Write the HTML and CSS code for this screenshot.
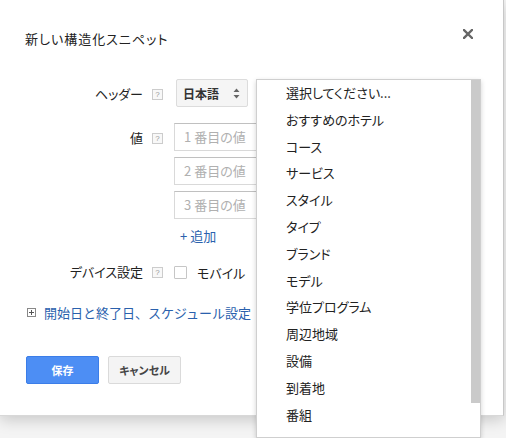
FILE: index.html
```html
<!DOCTYPE html>
<html lang="ja">
<head>
<meta charset="utf-8">
<link rel="stylesheet" href="styles.css">
</head>
<body>
<div class="dialog">
  <div class="head">
    <div class="title">新しい構造化スニペット</div>
    <svg class="close" width="10" height="10" viewBox="0 0 10 10"><path d="M1 1L9 9M9 1L1 9" stroke="#666" stroke-width="2.4" stroke-linecap="square"/></svg>
  </div>
  <div class="form">
    <div class="row row-header">
      <div class="label">ヘッダー</div>
      <span class="help">?</span>
      <div class="select">
        <span class="select-text">日本語</span>
        <svg width="7" height="11" viewBox="0 0 7 11"><path d="M3.5 0.5L6.5 4H0.5Z M3.5 10.5L6.5 7H0.5Z" fill="#666"/></svg>
      </div>
    </div>
    <div class="row row-values">
      <div class="label">値</div>
      <span class="help">?</span>
      <div class="values">
        <div class="input">1 番目の値</div>
        <div class="input">2 番目の値</div>
        <div class="input input-last">3 番目の値</div>
        <div class="add">+ 追加</div>
      </div>
    </div>
    <div class="row row-device">
      <div class="label">デバイス設定</div>
      <span class="help">?</span>
      <span class="checkbox"></span>
      <span class="check-label">モバイル</span>
    </div>
    <div class="schedule">
      <svg class="plusbox" width="9" height="9" viewBox="0 0 9 9"><rect x="0.5" y="0.5" width="8" height="8" fill="#fff" stroke="#888"/><path d="M2 4.5H7M4.5 2V7" stroke="#555"/></svg>
      <span class="link">開始日と終了日、スケジュール設定</span>
    </div>
    <div class="buttons">
      <span class="btn btn-primary">保存</span>
      <span class="btn btn-default">キャンセル</span>
    </div>
  </div>
</div>
<div class="dropdown">
  <div class="item">選択してください...</div>
  <div class="item">おすすめのホテル</div>
  <div class="item">コース</div>
  <div class="item">サービス</div>
  <div class="item">スタイル</div>
  <div class="item">タイプ</div>
  <div class="item">ブランド</div>
  <div class="item">モデル</div>
  <div class="item">学位プログラム</div>
  <div class="item">周辺地域</div>
  <div class="item">設備</div>
  <div class="item">到着地</div>
  <div class="item">番組</div>
  <div class="thumb"></div>
</div>
</body>
</html>
```
FILE: styles.css
```css
html, body {
  margin: 0;
  padding: 0;
  height: 438px;
  overflow: hidden;
}
body {
  background: #f4f4f4;
  font-family: "Noto Sans CJK JP", "Liberation Sans", sans-serif;
  font-size: 13px;
  color: #222;
  position: relative;
  font-feature-settings: "palt";
}
.dialog {
  width: 504px;
  height: 416px;
  box-sizing: border-box;
  background: #fff;
  border-right: 1px solid #c8c8c8;
  border-bottom: 1px solid #d8d8d8;
  box-shadow: 0 4px 14px rgba(0,0,0,0.18);
}
.head {
  display: flex;
  justify-content: space-between;
  align-items: center;
  padding: 30px 30px 0 25px;
  height: 18px;
}
.title {
  font-size: 13px;
  line-height: 18px;
  color: #222;
  letter-spacing: 1px;
}
.close {
  margin-top: -10px;
}
.form {
  margin-top: 31px;
}
.row {
  display: flex;
  align-items: flex-start;
}
.label {
  width: 143px;
  text-align: right;
  line-height: 28px;
  height: 28px;
  padding-top: 1px;
  box-sizing: border-box;
  color: #222;
}
.help {
  width: 9px;
  height: 9px;
  border: 1px solid #ccc;
  background: #f8f8f8;
  color: #999;
  font-size: 8px;
  line-height: 9px;
  text-align: center;
  margin: 10px 11px 0 9px;
  font-family: "Liberation Sans", sans-serif;
}
.row-header .help { margin-right: 13px; }
.select {
  width: 72px;
  height: 28px;
  box-sizing: border-box;
  background: #f5f5f5;
  border: 1px solid #dcdcdc;
  border-radius: 2px;
  display: flex;
  align-items: center;
  justify-content: space-between;
  padding: 0 7px 0 6px;
}
.select-text {
  font-weight: bold;
  font-size: 12px;
  color: #333;
}
.row-values {
  margin-top: 16px;
}
.values {
  display: flex;
  flex-direction: column;
}
.input {
  width: 200px;
  height: 28px;
  box-sizing: border-box;
  border: 1px solid #d9d9d9;
  border-top-color: #c0c0c0;
  color: #b0b0b0;
  line-height: 26px;
  padding-left: 9px;
  margin-bottom: 6px;
}
.input-last {
  margin-bottom: 8px;
}
.add {
  color: #2a61ad;
  line-height: 18px;
  padding-left: 6px;
}
.row-device {
  margin-top: 17px;
  align-items: center;
  height: 20px;
}
.row-device .label {
  line-height: 20px;
  height: 20px;
  padding-top: 0;
}
.row-device .help { margin-top: 0; }
.checkbox {
  width: 11px;
  height: 11px;
  border: 1px solid #c6c6c6;
  border-radius: 1px;
  background: #fff;
}
.check-label {
  margin-left: 10px;
}
.schedule {
  margin-top: 21px;
  display: flex;
  align-items: center;
  padding-left: 27px;
  height: 18px;
}
.link {
  color: #2a61ad;
  margin-left: 8px;
  white-space: nowrap;
  font-feature-settings: normal;
}
.buttons {
  margin-top: 35px;
  padding-left: 26px;
  display: flex;
  gap: 9px;
}
.btn {
  width: 73px;
  height: 28px;
  box-sizing: border-box;
  border-radius: 2px;
  font-weight: bold;
  font-size: 11px;
  display: flex;
  align-items: center;
  justify-content: center;
}
.btn-primary {
  background: #4d8ef4;
  border: 1px solid #3b7de8;
  color: #fff;
}
.btn-default {
  background: #f4f4f4;
  border: 1px solid #dadada;
  color: #444;
}
.dropdown {
  position: absolute;
  left: 256px;
  top: 79px;
  width: 225px;
  height: 359px;
  box-sizing: border-box;
  background: #fff;
  border: 1px solid #cfcfcf;
  box-shadow: 0 2px 5px rgba(0,0,0,0.18);
  padding-top: 0;
}
.item {
  height: 26.8px;
  line-height: 26px;
  padding-left: 29px;
  color: #222;
  white-space: nowrap;
}
.thumb {
  position: absolute;
  right: 0;
  top: 0;
  width: 9px;
  height: 323px;
  background: #cacaca;
}
```
